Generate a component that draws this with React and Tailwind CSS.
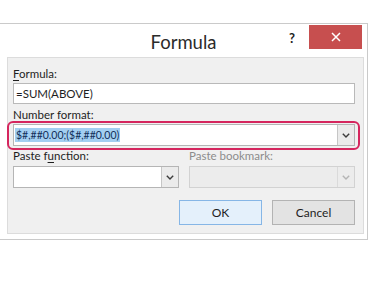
import { useState } from 'react';

function Chevron({ disabled }) {
  return (
    <svg width="8" height="5" viewBox="0 0 8 5" className="block">
      <path
        d="M0.8 0.8 L4 4 L7.2 0.8"
        fill="none"
        stroke={disabled ? '#b4b4b4' : '#3c3c3c'}
        strokeWidth="1.4"
      />
    </svg>
  );
}

function Select({ children, disabled }) {
  return (
    <div
      className={`flex h-[22px] border ${
        disabled ? 'border-[#d2d2d2] bg-[#ececec]' : 'border-[#b5b5b5] bg-white'
      }`}
    >
      <div className="flex-1 flex items-center pl-[1px] overflow-hidden">{children}</div>
      <div
        className={`w-[17px] flex items-center justify-center border-l ${
          disabled ? 'border-[#dadada] bg-[#ececec]' : 'border-[#c6c6c6] bg-[#ebebeb]'
        }`}
      >
        <Chevron disabled={disabled} />
      </div>
    </div>
  );
}

export default function App() {
  const [formula, setFormula] = useState('=SUM(ABOVE)');

  return (
    <div className="w-[375px] h-[281px] bg-white pt-[23px] overflow-hidden font-['Lato',sans-serif] text-[#1e1e1e]">
      <div className="w-[368px] border border-l-0 border-[#cacaca] bg-white pl-[7px] pr-[3px] pb-[5px]">
        {/* title bar */}
        <div className="h-[33px] grid grid-cols-[1fr_auto_1fr] -ml-[7px] -mr-[3px]">
          <div />
          <div className="text-[18.5px] leading-[33px] text-[#2b2b2b] pt-[2px]">Formula</div>
          <div className="flex justify-end items-start pr-[5px]">
            <span className="mt-[7px] mr-[14px] text-[13px] leading-[14px] font-bold text-[#222]">?</span>
            <button className="mt-[1px] w-[53px] h-[24px] bg-[#c74f4f] flex items-center justify-center">
              <svg width="10" height="10" viewBox="0 0 10 10">
                <path d="M1 1 L9 9 M9 1 L1 9" stroke="#fff" strokeWidth="1.5" />
              </svg>
            </button>
          </div>
        </div>

        {/* panel */}
        <div className="border border-[#dcdcdc] bg-[#f0f0f0] pl-[5px] pr-[8px] pt-[8px] pb-[8px] text-[11.5px] leading-[16px]">
          <div>
            <span className="underline underline-offset-2">F</span>ormula:
          </div>
          <input
            value={formula}
            onChange={(e) => setFormula(e.target.value)}
            className="mt-[1px] block w-full h-[21px] border border-[#b9b9b9] bg-white px-[2px] text-[11.5px] outline-none"
          />

          <div className="mt-[3px]">
            <span className="underline underline-offset-2">N</span>umber format:
          </div>
          <div className="relative mt-[1px]">
            <Select>
              <span className="bg-[#a3cff1] text-[#12305a] text-[10.5px] leading-[14px] px-[1px]">$#,##0.00;($#,##0.00)</span>
            </Select>
            <div className="absolute -left-[6px] -right-[5px] -top-[3px] -bottom-[4px] border-2 border-[#d5265e] rounded-[6px] pointer-events-none" />
          </div>

          <div className="grid grid-cols-2 gap-x-[10px] mt-[2px]">
            <div>
              <div>
                Paste f<span className="underline underline-offset-2">u</span>nction:
              </div>
              <div className="mt-[2px]">
                <Select />
              </div>
            </div>
            <div>
              <div className="text-[#8c8c8c]">Paste bookmark:</div>
              <div className="mt-[2px]">
                <Select disabled />
              </div>
            </div>
          </div>

          <div className="flex justify-end gap-[10px] mt-[12px]">
            <button className="w-[83px] h-[25px] border border-[#86b6e6] bg-[#e4f0fb] text-[12px]">OK</button>
            <button className="w-[83px] h-[25px] border border-[#b3b3b3] bg-[#e3e3e3] text-[12px]">Cancel</button>
          </div>
        </div>
      </div>
    </div>
  );
}
